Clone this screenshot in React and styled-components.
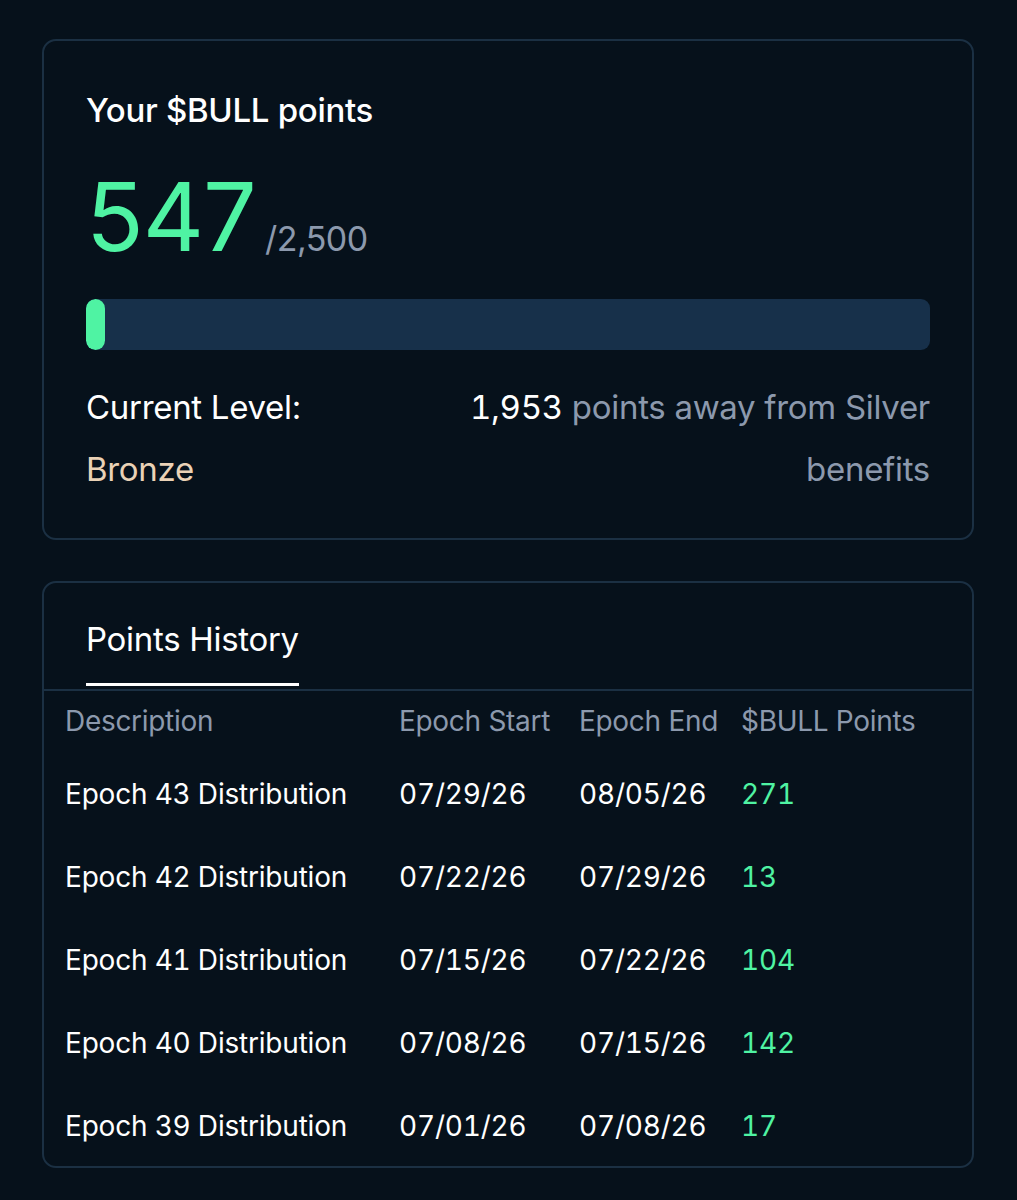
import React from "react";
import styled, { createGlobalStyle } from "styled-components";

const Global = createGlobalStyle`
  html, body { margin: 0; padding: 0; background: #06111b; }
  body { font-family: Inter, "Noto Sans", sans-serif; color: #ffffff; }
`;

const Page = styled.div`
  padding: 39px 43px 32px 42px;
  display: flex;
  flex-direction: column;
  gap: 41px;
`;

const Card = styled.section`
  border: 2px solid #1b3043;
  border-radius: 14px;
  background: #06111b;
`;

const PointsCard = styled(Card)`
  padding: 50px 42px 38px 42px;
  display: flex;
  flex-direction: column;
`;

const Title = styled.h2`
  margin: 0;
  font-size: 33px;
  font-weight: 500;
  line-height: 38px;
  letter-spacing: -0.3px;
`;

const ScoreRow = styled.div`
  display: flex;
  align-items: baseline;
  gap: 9px;
  margin-top: 42px;
  height: 92px;
`;

const Score = styled.span`
  font-size: 95px;
  font-weight: 400;
  color: #4ff3a3;
  line-height: 92px;
  letter-spacing: -1px;
`;

const Total = styled.span`
  font-size: 34px;
  color: #8c99ad;
  letter-spacing: -0.5px;
`;

const Track = styled.div`
  margin-top: 36px;
  height: 51px;
  border-radius: 9px;
  background: #17304a;
  overflow: hidden;
`;

const Fill = styled.div`
  height: 100%;
  border-radius: 10px;
  background: #4ff3a3;
`;

const LevelRow = styled.div`
  margin-top: 26px;
  display: flex;
  justify-content: space-between;
  align-items: flex-start;
  font-size: 33px;
  line-height: 62px;
  letter-spacing: -0.3px;
`;

const LevelLabel = styled.div`
  display: flex;
  flex-direction: column;
  color: #ffffff;
`;

const LevelName = styled.span`
  color: #ead2b6;
`;

const Away = styled.div`
  text-align: right;
  width: 480px;
  color: #8c99ad;
`;

const Strong = styled.span`
  color: #ffffff;
  font-feature-settings: "tnum";
`;

const HistoryCard = styled(Card)`
  display: flex;
  flex-direction: column;
`;

const Tabs = styled.div`
  display: flex;
  padding: 0 42px;
  border-bottom: 2px solid #1b3043;
`;

const Tab = styled.div`
  padding: 37px 0 25px;
  font-size: 33px;
  line-height: 38px;
  letter-spacing: -0.3px;
  color: #ffffff;
  border-bottom: 3px solid #ffffff;
  margin-bottom: 3px;
`;

const Table = styled.div`
  display: grid;
  grid-template-columns: 334px 180px 162px 1fr;
  padding: 12px 21px 0 21px;
`;

const Head = styled.div`
  font-size: 28px;
  line-height: 36px;
  color: #8c99ad;
  letter-spacing: -0.3px;
  padding-bottom: 28px;
`;

const Cell = styled.div`
  font-size: 28px;
  line-height: 36px;
  letter-spacing: -0.2px;
  font-feature-settings: "tnum";
  color: ${(p) => (p.$green ? "#4ff3a3" : "#ffffff")};
  padding: 9px 0 ${(p) => (p.$last ? "22px" : "38px")};
`;

const rows = [
  ["Epoch 43 Distribution", "07/29/26", "08/05/26", "271"],
  ["Epoch 42 Distribution", "07/22/26", "07/29/26", "13"],
  ["Epoch 41 Distribution", "07/15/26", "07/22/26", "104"],
  ["Epoch 40 Distribution", "07/08/26", "07/15/26", "142"],
  ["Epoch 39 Distribution", "07/01/26", "07/08/26", "17"],
];

export default function App() {
  const pct = (547 / 2500) * 100;
  return (
    <>
      <Global />
      <Page>
        <PointsCard>
          <Title>Your $BULL points</Title>
          <ScoreRow>
            <Score>547</Score>
            <Total>/2,500</Total>
          </ScoreRow>
          <Track>
            <Fill style={{ width: `${Math.max(pct * 0.103, 2.25)}%` }} />
          </Track>
          <LevelRow>
            <LevelLabel>
              <span>Current Level:</span>
              <LevelName>Bronze</LevelName>
            </LevelLabel>
            <Away>
              <Strong>1,953</Strong> points away from Silver benefits
            </Away>
          </LevelRow>
        </PointsCard>
        <HistoryCard>
          <Tabs>
            <Tab>Points History</Tab>
          </Tabs>
          <Table>
            <Head>Description</Head>
            <Head>Epoch Start</Head>
            <Head>Epoch End</Head>
            <Head>$BULL Points</Head>
            {rows.map((r, i) => {
              const last = i === rows.length - 1;
              return (
                <React.Fragment key={r[0]}>
                  <Cell $last={last}>{r[0]}</Cell>
                  <Cell $last={last}>{r[1]}</Cell>
                  <Cell $last={last}>{r[2]}</Cell>
                  <Cell $last={last} $green>
                    {r[3]}
                  </Cell>
                </React.Fragment>
              );
            })}
          </Table>
        </HistoryCard>
      </Page>
    </>
  );
}
